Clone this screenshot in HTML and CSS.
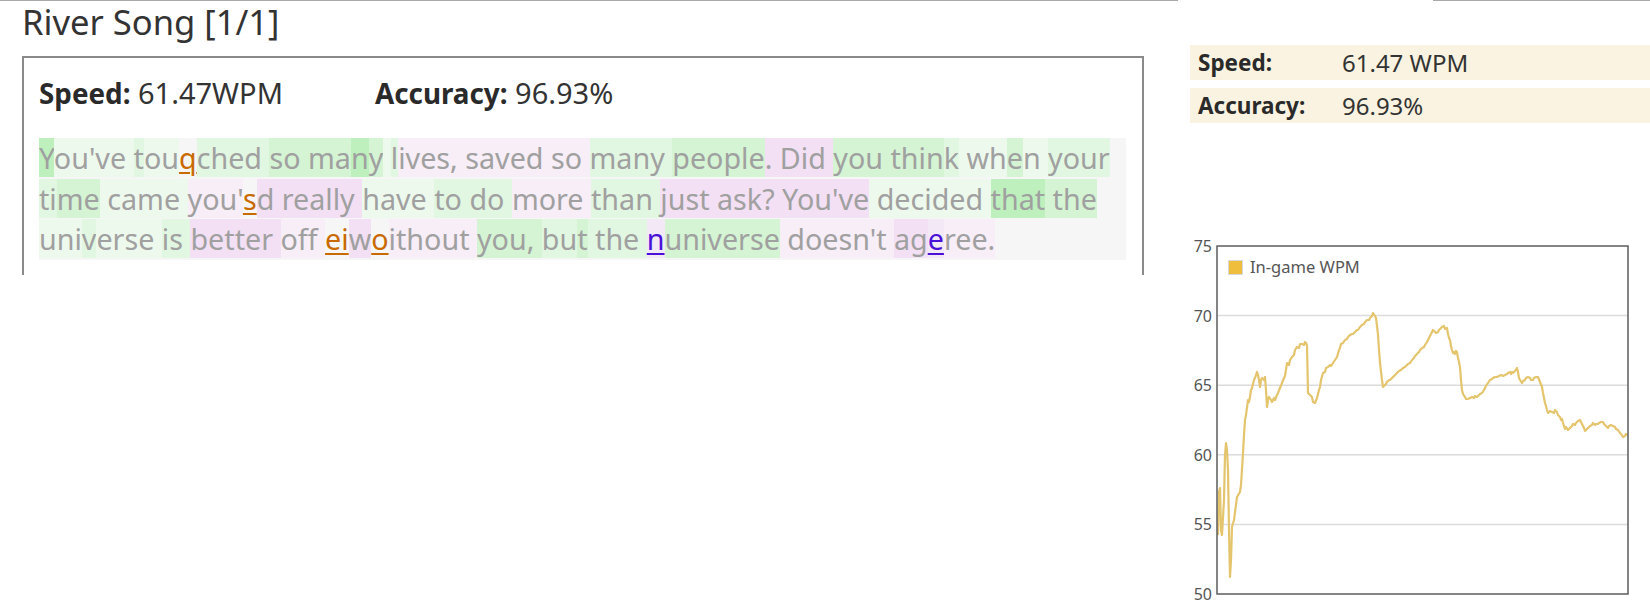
FILE: index.html
```html
<!DOCTYPE html>
<html lang="en">
<head>
<meta charset="utf-8">
<title>River Song [1/1]</title>
<link rel="stylesheet" href="styles.css">
</head>
<body>
<div class="topline"><div class="seg seg-a"></div><div class="seg seg-b"></div></div>
<div class="page">
  <main class="main">
    <h1 class="title">River Song [1/1]</h1>
    <section class="result">
      <div class="stats">
        <span class="stat stat-speed"><b>Speed:</b> 61.47WPM</span>
        <span class="stat"><b>Accuracy:</b> 96.93%</span>
      </div>
      <div class="typed"><span class="g3">Y</span><span class="g0">ou've </span><span class="g1">t</span><span class="g0">ou</span><span class="err">q</span><span class="g1">ched </span><span class="g2">so ma</span><span class="g3">n</span><span class="g2">y</span><span class="g0"> </span><span class="g1">l</span><span class="p0">ives, saved so </span><span class="g1">many </span><span class="g2">people</span><span class="p1">. Did </span><span class="g2">you thin</span><span class="g1">k</span><span class="g0"> wh</span><span class="g2">e</span><span class="g0">n </span><span class="g1">your</span><br><span class="g1">ti</span><span class="g2">me</span><span class="g0"> came </span><span class="p0">you'</span><span class="err">s</span><span class="p1">d really </span><span class="g0">have </span><span class="g1">to do </span><span class="p0">more </span><span class="g1">than </span><span class="p1">just ask? You've</span><span class="g0"> decided </span><span class="g3">that</span><span class="g2"> the</span><br><span class="g0">uni</span><span class="g1">v</span><span class="g0">erse </span><span class="g1">is </span><span class="p1">better </span><span class="p0">off </span><span class="err">ei</span><span class="p1">w</span><span class="err">o</span><span class="p0">ithout </span><span class="g2">you, </span><span class="g1">bu</span><span class="g2">t</span><span class="g1"> the </span><span class="err2">n</span><span class="g2">universe</span><span class="p0"> doesn't </span><span class="p1">ag</span><span class="err2">e</span><span class="p0">ree.</span></div>
    </section>
  </main>
  <aside class="side">
    <div class="row"><span class="k">Speed:</span><span class="v">61.47 WPM</span></div>
    <div class="row"><span class="k">Accuracy:</span><span class="v">96.93%</span></div>
    <svg class="chart" width="460" height="379" viewBox="0 0 460 379" xmlns="http://www.w3.org/2000/svg">
      <g class="grid">
        <line x1="27" y1="85.6" x2="438" y2="85.6"/>
        <line x1="27" y1="155.2" x2="438" y2="155.2"/>
        <line x1="27" y1="224.8" x2="438" y2="224.8"/>
        <line x1="27" y1="294.4" x2="438" y2="294.4"/>
      </g>
      <g class="ylabels">
        <text x="22" y="16">75</text>
        <text x="22" y="85.6">70</text>
        <text x="22" y="155.2">65</text>
        <text x="22" y="224.8">60</text>
        <text x="22" y="294.4">55</text>
        <text x="22" y="364">50</text>
      </g>
      <polyline class="wpm" points="28,305 29,262 30,258 31,300 32,305 34,270 35,225 36,213 37,220 38,240 39,300 40,347 41,330 42,297 44,290 47,267 50,262 51,255 53,223 54,205 55,190 56,185 58,170 59,172 60,167 61,160 62,158 64,150 65,148 67,142 68,145 69,150 70,157 71,150 72,148 74,150 75,147 76,160 77,177 78,170 79,167 81,170 82,172 84,168 85,170 87,165 88,163 90,158 92,153 94,148 95,146 97,133 99,135 100,130 102,127 104,125 105,120 107,117 109,118 110,114 112,114 114,115 115,112 116,113 117,115 118,163 120,165 122,167 123,172 125,173 127,168 129,160 130,157 131,150 133,143 135,142 136,138 138,137 140,135 141,136 143,133 145,130 147,127 149,120 150,118 151,114 153,113 155,110 157,109 158,107 160,105 162,104 163,104 165,102 167,100 168,100 170,97 172,95 174,94 175,92 177,90 179,90 180,88 182,86 183,83 185,86 186,88 187,96 188,105 189,120 190,133 192,150 193,157 195,155 196,154 197,152 199,150 200,150 202,148 204,146 205,145 207,143 209,141 211,140 213,138 215,137 217,135 218,134 220,133 222,130 224,128 225,126 227,124 229,122 230,120 232,118 234,117 235,115 237,112 238,110 240,106 241,104 243,100 244,101 246,103 248,102 249,100 251,98 252,97 254,96 255,99 257,98 258,104 259,108 260,110 261,116 262,120 263,123 264,122 265,124 266,121 267,122 268,128 269,132 270,137 271,150 272,160 273,164 275,167 276,169 278,169 280,168 282,167 284,168 285,166 287,167 289,165 290,164 292,163 294,160 296,156 298,153 300,150 302,149 303,148 305,147 307,147 309,146 311,145 313,146 315,145 317,144 318,143 320,142 321,144 322,142 323,143 325,141 327,138 328,142 329,148 330,150 332,153 333,151 335,150 336,148 338,147 340,148 341,150 343,150 344,148 346,147 348,147 350,152 352,157 353,163 354,168 355,173 356,176 357,180 358,183 360,181 362,182 364,183 365,180 367,182 368,185 370,187 371,190 372,189 373,193 374,196 375,199 376,197 378,200 380,198 382,196 383,194 385,195 386,193 388,191 390,190 392,194 394,198 395,201 397,199 398,198 400,196 402,195 403,193 405,195 406,194 408,194 409,193 411,192 413,192 414,194 416,196 418,198 419,196 421,195 423,196 425,197 426,199 428,200 430,203 431,204 433,207 435,206 436,204 438,205"/>
      <rect class="frame" x="27" y="16" width="411" height="348"/>
      <rect class="legend-swatch" x="38.5" y="30.5" width="14" height="14"/>
      <text class="legend" x="60" y="43">In-game WPM</text>
    </svg>
  </aside>
</div>
</body>
</html>
```

FILE: styles.css
```css
* { box-sizing: border-box; }

html, body {
  margin: 0;
  padding: 0;
  background: #ffffff;
}

body {
  font-family: "Noto Sans", "Open Sans", sans-serif;
  color: #333333;
  width: 1650px;
  height: 609px;
  overflow: hidden;
}

.topline {
  display: flex;
  height: 1px;
  gap: 255px;
}

.seg {
  height: 1px;
  background: #a8a8a8;
}

.seg-a { width: 1178px; }
.seg-b { flex: 1; }

.page {
  display: flex;
  align-items: flex-start;
}

.main {
  margin-left: 22px;
  width: 1122px;
  flex: none;
}

.title {
  margin: 0 0 14px 0;
  font-size: 34.6px;
  font-weight: 400;
  line-height: 41px;
  color: #333333;
}

.result {
  border: 2px solid #8a8a8a;
  border-bottom: none;
  padding: 18px 16px 15px 15px;
}

.stats {
  display: flex;
  align-items: baseline;
  font-size: 29px;
  line-height: 34px;
  color: #333333;
  margin-bottom: 28px;
}

.stat b {
  font-weight: 700;
  font-size: 27.8px;
  color: #2a2a2a;
}

.stat-speed {
  width: 336px;
}

.typed {
  background: #f6f6f6;
  color: #a0a0a0;
  font-size: 28.7px;
  line-height: 40.5px;
  white-space: nowrap;
}

.g0 { background: #eef9ee; }
.g1 { background: #e2f7e2; }
.g2 { background: #d4f4d4; }
.g3 { background: #bdf0bd; }
.p0 { background: #f7eef7; }
.p1 { background: #f3e0f4; }

.err {
  color: #c96a00;
  text-decoration: underline;
  text-decoration-thickness: 2px;
  text-underline-offset: 3px;
  background: #f6f6f6;
}

.err2 {
  color: #4a10d8;
  text-decoration: underline;
  text-decoration-thickness: 2px;
  text-underline-offset: 3px;
  background: #f3e9f6;
}

.side {
  margin-left: 46px;
  flex: 1;
  display: flex;
  flex-direction: column;
  padding-top: 44px;
}

.row {
  display: flex;
  align-items: center;
  height: 35px;
  margin-bottom: 8px;
  background: #faf3e1;
  padding-left: 8px;
  font-size: 24px;
  color: #333333;
}

.row .k {
  width: 144px;
  font-weight: 700;
  font-size: 22.5px;
  color: #2a2a2a;
}

.chart {
  display: block;
  margin-top: 99px;
}

.grid line {
  stroke: #dcdcdc;
  stroke-width: 1.5;
}

.ylabels text {
  font-family: "Noto Sans", sans-serif;
  font-size: 16px;
  fill: #555555;
  text-anchor: end;
  dominant-baseline: central;
}

.wpm {
  fill: none;
  stroke: #e4c46c;
  stroke-width: 2.2;
  stroke-linejoin: round;
}

.frame {
  fill: none;
  stroke: #5c5c5c;
  stroke-width: 1.5;
}

.legend-swatch {
  fill: #efbe3c;
  stroke: #d8d8d8;
  stroke-width: 1;
}

.legend {
  font-family: "Noto Sans", sans-serif;
  font-size: 16.5px;
  fill: #555555;
}
```
